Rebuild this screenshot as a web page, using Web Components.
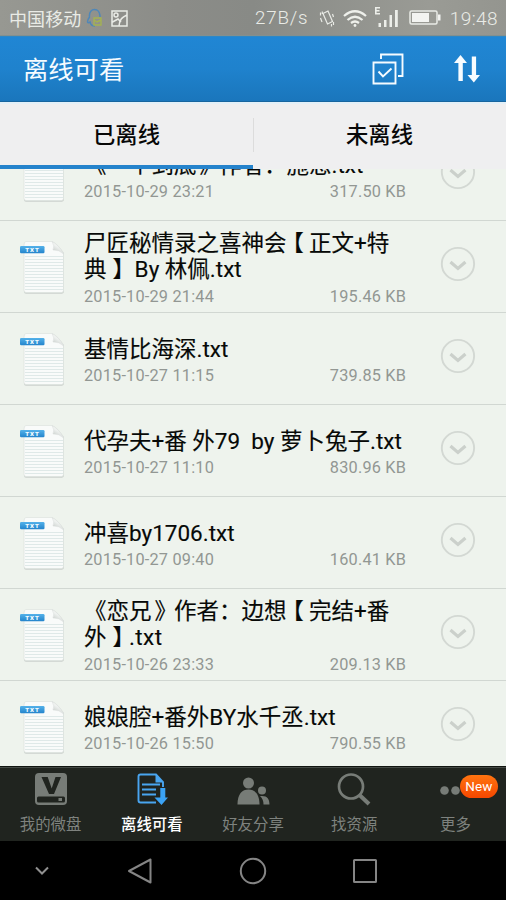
<!DOCTYPE html>
<html lang="zh-CN">
<head>
<meta charset="utf-8">
<title>离线可看</title>
<style>
html,body{margin:0;height:900px;overflow:hidden;background:#000}
body{font-family:Roboto,"Noto Sans CJK SC",sans-serif;text-spacing-trim:space-all}
</style>
</head>
<body>
<disk-app></disk-app>
<script>
const define = (name, html, setup) => customElements.define(name, class extends HTMLElement {
  connectedCallback() {
    if (this.shadowRoot) return;
    const root = this.attachShadow({mode: 'open'});
    const t = document.createElement('template');
    t.innerHTML = html;
    root.append(t.content.cloneNode(true));
    if (setup) setup(this, root);
  }
});

define('status-bar', `
<style>
:host{display:flex;align-items:center;height:36px;box-sizing:border-box;padding:1px 8px 0 9px;color:#e9ebe6;font-size:18px;
background:linear-gradient(90deg,#979892,#8b8c88 35%,#888a86 50%,#9a9b95 85%,#94958f);border-bottom:1px solid #83908f}
svg{display:block;flex:none}
.carrier{width:73px;white-space:nowrap;letter-spacing:.1px}
.push{margin-left:auto}
.speed{letter-spacing:.8px;width:57px;font-weight:300;font-size:18.800px;white-space:nowrap}
.time{font-weight:300;font-size:19px;width:49px;white-space:nowrap;text-align:right;letter-spacing:.4px}
</style>
<span class="carrier">中国移动</span>
<svg width="16" height="20" viewBox="0 0 16 20" style="margin-left:4px" fill="none"><path d="M11 2C5 0 3 5 3.500 9C0 14 2 16 4 14C5 18 7 18 9 18M11 2C14 4 14 6 14 9" stroke="#4f87b8" stroke-width="1.500"/><path d="M8 10h7v7H8zM8 12l3 2 4-2" stroke="#a4b252" stroke-width="1.400"/></svg>
<svg width="17" height="17" viewBox="0 0 17 17" style="margin-left:9px" fill="none" stroke="#e9ebe6" stroke-width="1.500"><path d="M1 1h15v15H1zM1.500 12L7 9l3 3M8 16C8 9 12 7 16 5"/><circle cx="5" cy="5" r="2"/></svg>
<span class="push speed">27B/s</span>
<svg width="16" height="19" viewBox="0 0 16 19" style="margin-left:7px" fill="none" stroke="#e9ebe6" stroke-width="1.200"><path d="M4 4.500l5-2.500 4.500 10.500-5 2.500zM1.500 3.500v3M3.300 2.500v2.500M1.500 9l1.500 4M14.500 13v3M12.500 15v2.500M13.500 5l1 3"/></svg>
<svg width="24" height="19" viewBox="0 0 24 19" style="margin-left:8px" fill="none" stroke="#eef0eb" stroke-width="2.200"><path d="M1 7Q12-2.500 23 7M4.500 11Q12 4.500 19.500 11M8 14Q12 11 16 14"/><circle cx="12" cy="16.500" r="1.400" fill="#eef0eb" stroke="none"/></svg>
<svg width="26" height="22" viewBox="0 0 26 22" style="margin-left:7px" fill="#eceee9"><path d="M1 0h5v1.500H2.600v1.600H5.500v1.300H2.600v1.600H6V7.500H1zM4.500 16h2.500v4H4.500zM10 13h2.500v7H10zM15.500 8h2.500v12h-2.500zM21 3h2.800v17H21z"/></svg>
<svg width="33" height="16" viewBox="0 0 33 16" style="margin-left:9px"><rect x="1" y="1" width="27" height="13" rx="1.500" fill="none" stroke="#e9ebe6" stroke-width="1.500"/><path d="M3 3h17v9H3zM29 4.500h2.500v6H29z" fill="#f3f4f1"/></svg>
<span class="time" style="margin-left:7px">19:48</span>`);

define('title-bar', `
<style>
:host{display:flex;align-items:center;height:66px;box-sizing:border-box;padding:0 25px 0 23px;color:#f5fbff;background:linear-gradient(#2086d4,#1f82cd 50%,#1a76bc);border-top:1px solid #2f87c5;border-bottom:1px solid #17659f}
h1{font-size:25.300px;font-weight:400;margin:3px 0 0;flex:1;line-height:34px}
svg{display:block}
</style>
<h1><slot></slot></h1>
<svg width="32" height="32" viewBox="0 0 32 32" fill="none" stroke="#f5fbff" stroke-width="1.900"><path d="M1.500 9.500h22v21h-22zM9 6V1.500h21.500V23H26M6.500 18.500l4.500 5 8.500-8"/></svg>
<svg width="28" height="30" viewBox="0 0 28 30" style="margin-left:49px" fill="#f8fcff"><path d="M7.500 1L14 9h-4.200v18H5.400V9H1zM18.800 2.500h4.300V21H27l-6.200 7.500L14.500 21h4.300z"/></svg>`);

define('tab-item', `
<style>
:host{display:flex;flex:1;align-items:center;justify-content:center;box-sizing:border-box;font-size:22.300px;line-height:30px;font-weight:500;color:#080808;border-bottom:4px solid transparent;padding-top:3px}
:host([active]){border-color:#2583cc}
</style><slot></slot>`);
define('tab-strip', `
<style>
:host{display:flex;height:67px;background:#efeff0;box-shadow:inset 0 2px #e3f0f8}
</style><slot></slot>`);

define('txt-icon', `
<style>:host{display:block;width:48px;height:56px}svg{display:block;overflow:visible}</style>
<svg width="48" height="56" viewBox="0 0 48 56">
<defs><linearGradient id="b" x2="0" y2="1"><stop stop-color="#54b2ea"/><stop offset="1" stop-color="#2383cb"/></linearGradient>
<linearGradient id="f" x1=".9" y1="0" x2=".3" y2="1"><stop stop-color="#fff"/><stop offset=".5" stop-color="#eef1ef"/><stop offset="1" stop-color="#c4cac7"/></linearGradient></defs>
<path d="M5 4Q5 2 7 2H33Q39 4 45 12V50Q45 52.700 43 52.700H7Q5 52.700 5 50.500z" fill="#cbd1cd"/>
<path d="M5 4Q5 .5 7 .5H33Q39 3 44.500 12V49.500Q44.500 51.500 42.500 51.500H7Q5 51.500 5 49.500z" fill="#f9fbfa" stroke="#dde2de" stroke-width=".7"/>
<path d="M6 15.500H44M6 18.500H44M6 21.500H44M6 24.500H44M6 27.500H44M6 30.500H44M6 33.500H44M6 36.500H44M6 39.500H44M6 42.500H44M6 45.500H44M6 48.500H44" stroke="#dfe9e8" stroke-width="1"/>
<path d="M33 .5Q39 3 44.700 13Q40 8.500 34 9Q36 5 33 .5z" fill="url(#f)" stroke="#d6dbd8" stroke-width=".5"/>
<rect x="1" y="5" width="24.500" height="7.300" rx="1.200" fill="url(#b)"/>
<text x="13.600" y="11" text-anchor="middle" font-family="Roboto" font-size="6.200" font-weight="900" letter-spacing="1" fill="#f4fbff">TXT</text>
</svg>`);

define('file-row', `
<style>
:host{display:flex;align-items:center;flex:none;height:92px;box-sizing:border-box;border-bottom:1px solid #d1d7d2;padding:0 30px 0 19px;background:#eef3ed}
txt-icon{margin-top:4px}
.body{width:323px;margin:6px 34px 0 17px}
.name{font-size:22.500px;line-height:25.500px;color:#070907;white-space:pre;font-weight:400;-webkit-text-stroke:.15px #070907}
.meta{display:flex;justify-content:space-between;font-size:16.300px;line-height:20px;margin-top:4px;color:#929793;letter-spacing:.2px}
:host([tall]) .body{margin-top:5px}
:host([tall]) .meta{margin-top:5px}
svg{display:block;margin-top:-5px}
/* half-width brackets, centred in a full-width cell */
::slotted(b){font-weight:400;font-feature-settings:"halt";padding:0 calc(11.25px - var(--lead,6px)) 0 var(--lead,6px)}
</style>
<txt-icon></txt-icon>
<div class="body"><div class="name"><slot></slot></div><div class="meta"><span id="d"></span><span id="s"></span></div></div>
<svg width="36" height="36" viewBox="0 0 36 36" fill="none"><circle cx="18" cy="18" r="16.200" stroke="#d3d8d3" stroke-width="1.900"/><path d="M10.500 16l7.500 6.500 7.500-6.500" stroke="#cbd0cb" stroke-width="3.200"/></svg>`,
(el, root) => {
  root.getElementById('d').textContent = el.getAttribute('date');
  root.getElementById('s').textContent = el.getAttribute('size');
});

define('file-list', `
<style>:host{display:block;height:597px;overflow:hidden;background:#eef3ed}.in{display:flex;flex-direction:column;margin-top:-40px}</style>
<div class="in"><slot></slot></div>`);

define('nav-item', `
<style>
:host{display:flex;flex:1;flex-direction:column;align-items:center;color:#7e827e;font-size:15.400px;line-height:20px;position:relative}
:host([active]){color:#fff}
:host([active]) .label{font-weight:500}
.icon{height:34px;margin:5px 0 9px;display:flex}
.badge{position:absolute;left:55px;top:8px;width:38px;height:23px;border-radius:12px;background:linear-gradient(#ff7410,#f54700);color:#fff;font-size:13.500px;line-height:23px;text-align:center;letter-spacing:.1px}
.badge:empty{display:none}
</style>
<span class="icon"><slot name="icon"></slot></span><span class="label"><slot></slot></span><span class="badge"></span>`,
(el, root) => { root.querySelector('.badge').textContent = el.getAttribute('badge') || ''; });
define('bottom-nav', `
<style>:host{display:flex;height:75px;box-sizing:border-box;background:#20241f;border-top:1px solid #101410;box-shadow:inset 0 1px #454a45}</style><slot></slot>`);

define('system-nav', `
<style>:host{display:grid;grid-template-columns:84px 112px 114px 110px;height:59px;background:#000;align-items:center;justify-items:center}svg{display:block}</style>
<svg width="14" height="10" viewBox="0 0 14 10" fill="none" stroke="#909090" stroke-width="2"><path d="M1 1.500l6 6 6-6"/></svg>
<svg width="26" height="28" viewBox="0 0 26 28" fill="none" stroke="#858585" stroke-width="2" stroke-linejoin="round"><path d="M23.500 2.500v23L2 14z"/></svg>
<svg width="28" height="28" viewBox="0 0 28 28" fill="none" stroke="#858585" stroke-width="2"><circle cx="14" cy="14" r="12.200"/></svg>
<svg width="26" height="26" viewBox="0 0 26 26" fill="none" stroke="#858585" stroke-width="2"><rect x="2" y="2" width="22" height="22" rx=".5"/></svg>`);

define('disk-app', `
<style>:host{display:flex;flex-direction:column;width:506px;height:900px;overflow:hidden}
.split{width:1px;height:34px;margin:16px -1px 0 0;background:#dcdcdc;flex:none}
.soft{--lead:4px}.left{--lead:10px}.right{--lead:3px}</style>
<status-bar></status-bar>
<title-bar>离线可看</title-bar>
<tab-strip><tab-item active>已离线</tab-item><span class="split"></span><tab-item>未离线</tab-item></tab-strip>
<file-list>
<file-row date="2015-10-29 23:21" size="317.50 KB">《一个到底<b class="right">》</b>作者：施恩.txt</file-row>
<file-row tall date="2015-10-29 21:44" size="195.46 KB">尸匠秘情录之喜神会<b>【</b>正文+特<br>典<b>】</b> By 林佩.txt</file-row>
<file-row date="2015-10-27 11:15" size="739.85 KB">基情比海深.txt</file-row>
<file-row date="2015-10-27 11:10" size="830.96 KB">代孕夫+番 外79  by 萝卜兔子.txt</file-row>
<file-row date="2015-10-27 09:40" size="160.41 KB">冲喜by1706.txt</file-row>
<file-row tall date="2015-10-26 23:33" size="209.13 KB">《恋兄<b class="right">》</b>作者：边想<b>【</b>完结+番<br>外<b>】</b><span style="letter-spacing:.4px">.txt</span></file-row>
<file-row date="2015-10-26 15:50" size="790.55 KB">娘娘腔+番外BY水千丞.txt</file-row>
</file-list>
<bottom-nav>
<nav-item>我的微盘<svg slot="icon" width="34" height="34" viewBox="0 0 34 34"><rect x="1" y="1" width="32" height="32" rx="4" fill="#777c77"/><path d="M7.500 5h6.200l4 11.500L21.500 5h5.500l-7 17h-5z" fill="#20241f"/><rect x="3" y="24.500" width="28" height="6" rx="1.500" fill="#20241f"/><path d="M24.500 26h3.500v3h-3.500z" fill="#777c77"/></svg></nav-item>
<nav-item active>离线可看<svg slot="icon" width="32" height="34" viewBox="0 0 32 34" fill="none" stroke="#49a5f0" stroke-width="1.900"><path d="M20 30.500H4.500Q2.500 30.500 2.500 28.500V4.500Q2.500 2.500 4.500 2.500H20L27 10V15"/><path d="M19.500 2v8.500H27.500z" fill="#49a5f0" stroke="none"/><path d="M6 12.500H24M6 17.500H20M6 22.500H20"/><path d="M24.300 16h5v9.500H32L25.500 33 18.500 25.500h5.800z" fill="#3ba3f5" stroke="none"/></svg></nav-item>
<nav-item>好友分享<svg slot="icon" width="34" height="34" viewBox="0 0 34 34" fill="#777c77"><circle cx="12.500" cy="11" r="5.500"/><path d="M1.500 32.500C1.500 22 6 17.500 12.500 17.500S23.500 22 23.500 32.500z"/><circle cx="26" cy="18.500" r="4"/><path d="M25 24C31 23.500 33.500 27 33.500 32.500H27.500Q27.500 27 24 24z"/></svg></nav-item>
<nav-item>找资源<svg slot="icon" width="34" height="34" viewBox="0 0 34 34" fill="none" stroke="#777c77"><circle cx="14" cy="14.500" r="12" stroke-width="2.700"/><path d="M22.500 23l9.500 9" stroke-width="4"/></svg></nav-item>
<nav-item badge="New">更多<svg slot="icon" width="30" height="34" viewBox="0 0 30 34" fill="#777c77"><circle cx="4.500" cy="18.500" r="4.300"/><circle cx="15.500" cy="18.500" r="4.300"/><circle cx="26" cy="18.500" r="4.300"/></svg></nav-item>
</bottom-nav>
<system-nav></system-nav>`);
</script>
</body>
</html>
